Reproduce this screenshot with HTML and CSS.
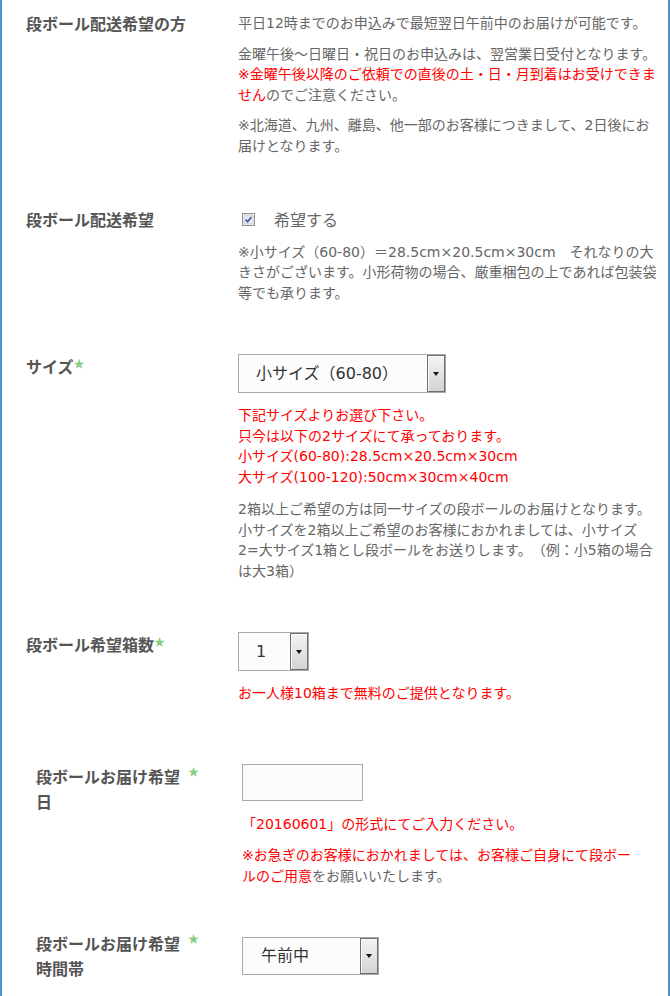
FILE: index.html
```html
<!DOCTYPE html>
<html lang="ja">
<head>
<meta charset="utf-8">
<title>段ボール配送</title>
<link rel="stylesheet" href="styles.css">
</head>
<body>
<div class="frame">
  <div class="form form-a">
    <div class="row">
      <div class="label">段ボール配送希望の方</div>
      <div class="field text-start">
        <p>平日12時までのお申込みで最短翌日午前中のお届けが可能です。</p>
        <p>金曜午後～日曜日・祝日のお申込みは、翌営業日受付となります。<br><span class="red">※金曜午後以降のご依頼での直後の土・日・月到着はお受けできま</span><br><span class="red">せん</span>のでご注意ください。</p>
        <p>※北海道、九州、離島、他一部のお客様につきまして、2日後にお<br>届けとなります。</p>
      </div>
    </div>

    <div class="row">
      <div class="label">段ボール配送希望</div>
      <div class="field text-start">
        <div class="check-line">
          <svg class="cb" width="13" height="13" viewBox="0 0 13 13"><rect x="0.5" y="0.5" width="12" height="12" fill="#fff" stroke="#8f8f8f"/><rect x="2" y="2" width="9" height="9" fill="#e6e9ef" stroke="#c9ccd3" stroke-width="1"/><path d="M3.6 6.4 L5.6 8.8 L9.4 3.9" fill="none" stroke="#3a58a0" stroke-width="1.6"/></svg>
          <span class="check-text">希望する</span>
        </div>
        <p class="note">※小サイズ（60-80）＝28.5cm×20.5cm×30cm　それなりの大<br>きさがございます。小形荷物の場合、厳重梱包の上であれば包装袋<br>等でも承ります。</p>
      </div>
    </div>

    <div class="row">
      <div class="label">サイズ<span class="star">★</span></div>
      <div class="field">
        <div class="select size"><span class="val">小サイズ（60-80）</span><span class="arrow"></span></div>
        <p class="note red">下記サイズよりお選び下さい。<br>只今は以下の2サイズにて承っております。<br>小サイズ(60-80):28.5cm×20.5cm×30cm<br>大サイズ(100-120):50cm×30cm×40cm</p>
        <p class="note">2箱以上ご希望の方は同一サイズの段ボールのお届けとなります。<br>小サイズを2箱以上ご希望のお客様におかれましては、小サイズ<br>2=大サイズ1箱とし段ボールをお送りします。（例：小5箱の場合<br>は大3箱）</p>
      </div>
    </div>

    <div class="row">
      <div class="label">段ボール希望箱数<span class="star">★</span></div>
      <div class="field">
        <div class="select count"><span class="val">1</span><span class="arrow"></span></div>
        <p class="note red">お一人様10箱まで無料のご提供となります。</p>
      </div>
    </div>
  </div>

  <div class="form form-b">
    <div class="row">
      <div class="label wrap"><span class="ltext">段ボールお届け希望日</span><span class="star">★</span></div>
      <div class="field">
        <div class="input"></div>
        <p class="note-date red">「20160601」の形式にてご入力ください。</p>
        <p class="note-hurry"><span class="red">※お急ぎのお客様におかれましては、お客様ご自身にて段ボー</span><br><span class="red">ルのご用意</span>をお願いいたします。</p>
      </div>
    </div>

    <div class="row">
      <div class="label wrap"><span class="ltext">段ボールお届け希望時間帯</span><span class="star">★</span></div>
      <div class="field time-field">
        <div class="select time"><span class="val">午前中</span><span class="arrow"></span></div>
      </div>
    </div>
  </div>
</div>
</body>
</html>
```

FILE: styles.css
```css
* {
  box-sizing: border-box;
}

html, body {
  margin: 0;
  padding: 0;
  background: #fff;
}

body {
  font-family: "DejaVu Sans", "Noto Sans CJK JP", sans-serif;
  font-size: 14px;
  color: #666;
  text-spacing-trim: space-all;
}

.frame {
  width: 670px;
  min-height: 996px;
  border-left: 2px solid #4c90d0;
  border-right: 2px solid #4c90d0;
  padding-top: 11px;
  overflow: hidden;
}

.row {
  display: grid;
  align-items: start;
}

.form-a .row {
  grid-template-columns: 212px 430px;
  padding-left: 24px;
}

.form-a .row + .row {
  margin-top: 51px;
}

.form-b {
  margin-top: 60px;
}

.form-b .row {
  grid-template-columns: 206px 410px;
  padding-left: 34px;
}

.form-b .row + .row {
  margin-top: 45px;
}

.label {
  font-size: 16px;
  font-weight: bold;
  color: #555;
  line-height: 24px;
  font-family: "Noto Sans CJK JP", sans-serif;
}

.label.wrap {
  display: flex;
  align-items: flex-start;
  line-height: 25px;
}

.ltext {
  width: 150px;
}

.star {
  font-family: "Noto Sans CJK JP", sans-serif;
  font-weight: normal;
  font-size: 11px;
  color: #86cc7c;
  vertical-align: 5px;
  line-height: 10px;
}

.label.wrap .star {
  margin-left: 2px;
  line-height: 14px;
  vertical-align: baseline;
}

.field p {
  margin: 0;
  line-height: 20.5px;
}

.field.text-start {
  padding-top: 2px;
}

.field p + p {
  margin-top: 10px;
}

.field p.note {
  margin-top: 12px;
}

.red {
  color: #ff0000;
}

.check-line {
  display: flex;
  align-items: center;
  height: 20.5px;
}

.cb {
  display: block;
  margin-left: 4px;
}

.check-text {
  margin-left: 19px;
  font-size: 16px;
  color: #666;
}

.select {
  display: flex;
  height: 39px;
  border: 1px solid #a9a9a9;
  background: #fcfcfc;
  font-size: 16px;
  color: #333;
}

.select .val {
  flex: 1;
  padding-left: 17px;
  line-height: 37px;
  white-space: nowrap;
}

.select .arrow {
  width: 18px;
  border: 1px solid #6f6f6f;
  box-shadow: inset 1px 1px 0 #fafafa;
  background: linear-gradient(#f4f4f4, #d3d3d3);
  display: flex;
  align-items: center;
  justify-content: center;
}

.select .arrow::before {
  content: "";
  border-left: 3.5px solid transparent;
  border-right: 3.5px solid transparent;
  border-top: 4px solid #111;
}

.select.size {
  width: 208px;
}

.select.count {
  width: 71px;
}

.select.time {
  width: 137px;
  height: 38px;
}

.select.time .val {
  line-height: 36px;
  padding-left: 18px;
}

.time-field {
  padding-top: 5.5px;
}

.input {
  width: 121px;
  height: 37px;
  border: 1px solid #a9a9a9;
  background: #fcfcfc;
}

.field p.note-date {
  margin-top: 13.5px;
}

.field p.note-hurry {
  margin-top: 10.5px;
}
```
